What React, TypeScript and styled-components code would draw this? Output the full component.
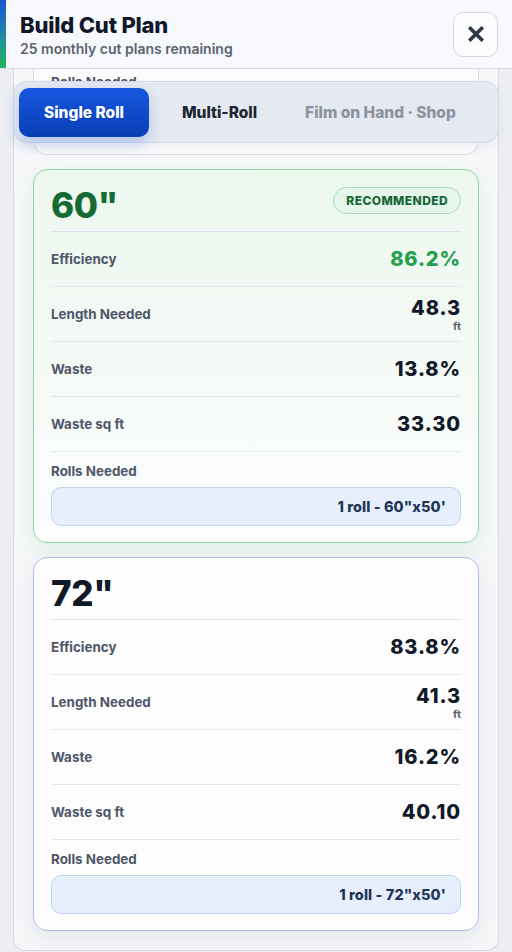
import styled, { createGlobalStyle } from "styled-components";

const GlobalStyle = createGlobalStyle`
  * { box-sizing: border-box; }
  html, body {
    margin: 0;
    padding: 0;
    background: #eef0f4;
    font-family: Inter, "Noto Sans", "Liberation Sans", sans-serif;
    color: #111827;
  }
`;

const Screen = styled.div`
  width: 512px;
  height: 952px;
  display: flex;
  flex-direction: column;
  overflow: hidden;
  background: linear-gradient(90deg, #eceef3 0%, #f3f4f7 50%, #eceef3 100%);
`;

const Header = styled.header`
  position: relative;
  z-index: 3;
  height: 69px;
  flex-shrink: 0;
  display: flex;
  align-items: center;
  justify-content: space-between;
  padding: 0 14px 0 20px;
  background: #f8f9fc;
  border-bottom: 1px solid #d6dae4;
  &::before {
    content: "";
    position: absolute;
    left: 0;
    top: 0;
    bottom: 0;
    width: 6px;
    background: linear-gradient(180deg, #1d55d6 0%, #1f8fa0 55%, #22b55a 100%);
  }
`;

const Titles = styled.div`
  display: flex;
  flex-direction: column;
  gap: 2px;
`;

const Title = styled.h1`
  margin: 0;
  font-size: 22px;
  font-weight: 800;
  letter-spacing: -0.2px;
  color: #0f172a;
`;

const Subtitle = styled.p`
  margin: 0;
  font-size: 14px;
  font-weight: 600;
  color: #5b6272;
`;

const CloseButton = styled.button`
  width: 45px;
  height: 45px;
  border-radius: 10px;
  border: 1px solid #d3d8e3;
  background: #fcfcfe;
  display: flex;
  align-items: center;
  justify-content: center;
  padding: 0;
  cursor: pointer;
`;

const Body = styled.div`
  position: relative;
  flex: 1;
  overflow: hidden;
`;

const Panel = styled.section`
  margin: -6px 13px 0 13px;
  padding: 0 19px 19px 19px;
  background: #f6f7f9;
  border: 1px solid #d8dce5;
  border-top: none;
  border-radius: 0 0 12px 12px;
  display: flex;
  flex-direction: column;
  gap: 14px;
`;

const Tabs = styled.nav`
  position: absolute;
  z-index: 2;
  top: 12px;
  left: 13px;
  right: 13px;
  height: 62px;
  display: flex;
  align-items: center;
  gap: 18px;
  padding: 0 5px;
  background: #e5e9f1;
  border: 1px solid #d2d9e6;
  border-radius: 14px;
  box-shadow: 0 4px 12px rgba(30, 50, 90, 0.06);
`;

const Tab = styled.button<{ $active?: boolean; $muted?: boolean }>`
  height: 49px;
  padding: ${(p) => (p.$active ? "0 25px" : "0 15px")};
  border: none;
  border-radius: 10px;
  font-family: inherit;
  font-size: 15.5px;
  font-weight: 800;
  white-space: nowrap;
  cursor: pointer;
  background: ${(p) =>
    p.$active ? "linear-gradient(180deg, #1656e0 0%, #0a3fb5 100%)" : "transparent"};
  color: ${(p) => (p.$active ? "#ffffff" : p.$muted ? "#8c93a0" : "#1f2634")};
  box-shadow: ${(p) => (p.$active ? "0 6px 14px rgba(22, 86, 224, 0.25)" : "none")};
`;

const Card = styled.article<{ $recommended?: boolean }>`
  border-radius: 14px;
  border: 1px solid ${(p) => (p.$recommended ? "#8fd6a0" : "#a8bfe9")};
  background: ${(p) =>
    p.$recommended
      ? "linear-gradient(180deg, #ecf7ee 0%, #f3f9f5 45%, #fcfdfd 100%)"
      : "#fdfdfe"};
  box-shadow: ${(p) =>
    p.$recommended
      ? "0 8px 22px rgba(34, 160, 80, 0.10)"
      : "0 8px 22px rgba(30, 45, 80, 0.08)"};
  padding: 0 17px 16px 17px;
  display: flex;
  flex-direction: column;
`;

const PartialCard = styled(Card)`
  border-top: none;
  border-radius: 0 0 14px 14px;
  padding-top: 0;
  padding-bottom: 17px;
  background: #fbfbfc;
  border-color: #d8dce5;
  box-shadow: none;
`;

const CardHead = styled.div`
  height: 62px;
  display: flex;
  align-items: center;
  justify-content: space-between;
  border-bottom: 1px solid #dde2ee;
`;

const Width = styled.h2<{ $green?: boolean }>`
  margin: 8px 0 0 0;
  font-size: 35px;
  font-weight: 800;
  letter-spacing: -0.3px;
  color: ${(p) => (p.$green ? "#166a34" : "#111827")};
`;

const Pill = styled.span`
  height: 27px;
  padding: 0 12px;
  display: inline-flex;
  align-items: center;
  border-radius: 14px;
  border: 1px solid #a9ddb7;
  background: #e6f5e9;
  color: #17653a;
  font-size: 12px;
  font-weight: 800;
  letter-spacing: 0.4px;
`;

const Row = styled.div`
  height: 55px;
  display: flex;
  align-items: center;
  justify-content: space-between;
  border-bottom: 1px solid #e3e7ef;
`;

const Label = styled.span`
  font-size: 13.4px;
  font-weight: 700;
  color: #4f5668;
`;

const Value = styled.div<{ $green?: boolean }>`
  display: flex;
  flex-direction: column;
  align-items: flex-end;
  font-size: 20px;
  font-weight: 800;
  letter-spacing: 0.9px;
  line-height: 24px;
  color: ${(p) => (p.$green ? "#22a04b" : "#111827")};
`;

const Unit = styled.span`
  display: block;
  margin-top: -1px;
  font-size: 11px;
  font-weight: 700;
  letter-spacing: 0;
  line-height: 14px;
  color: #5b6272;
`;

const RollsBlock = styled.div`
  display: flex;
  flex-direction: column;
  gap: 8px;
  padding-top: 11px;
`;

const RollBox = styled.div`
  height: 39px;
  display: flex;
  align-items: center;
  justify-content: flex-end;
  padding: 0 14px;
  border-radius: 10px;
  border: 1px solid #c0d3f2;
  background: #e7effc;
  color: #1e3557;
  font-size: 14.5px;
  font-weight: 800;
  letter-spacing: 0.1px;
`;

type Plan = {
  width: string;
  efficiency: string;
  length: string;
  waste: string;
  wasteSqFt: string;
  roll: string;
  recommended?: boolean;
};

const plans: Plan[] = [
  {
    width: '60"',
    efficiency: "86.2%",
    length: "48.3",
    waste: "13.8%",
    wasteSqFt: "33.30",
    roll: "1 roll - 60\"x50'",
    recommended: true,
  },
  {
    width: '72"',
    efficiency: "83.8%",
    length: "41.3",
    waste: "16.2%",
    wasteSqFt: "40.10",
    roll: "1 roll - 72\"x50'",
  },
];

function CloseIcon() {
  return (
    <svg width="20" height="20" viewBox="0 0 20 20" fill="none">
      <path d="M4.5 4.5 L15.5 15.5 M15.5 4.5 L4.5 15.5" stroke="#2f3746" strokeWidth="3.6" strokeLinecap="square" />
    </svg>
  );
}

function PlanCard({ plan }: { plan: Plan }) {
  return (
    <Card $recommended={plan.recommended}>
      <CardHead>
        <Width $green={plan.recommended}>{plan.width}</Width>
        {plan.recommended && <Pill>RECOMMENDED</Pill>}
      </CardHead>
      <Row>
        <Label>Efficiency</Label>
        <Value $green={plan.recommended}>{plan.efficiency}</Value>
      </Row>
      <Row>
        <Label>Length Needed</Label>
        <Value>
          <span>{plan.length}</span>
          <Unit>ft</Unit>
        </Value>
      </Row>
      <Row>
        <Label>Waste</Label>
        <Value>{plan.waste}</Value>
      </Row>
      <Row>
        <Label>Waste sq ft</Label>
        <Value>{plan.wasteSqFt}</Value>
      </Row>
      <RollsBlock>
        <Label>Rolls Needed</Label>
        <RollBox>{plan.roll}</RollBox>
      </RollsBlock>
    </Card>
  );
}

export default function App() {
  return (
    <>
      <GlobalStyle />
      <Screen>
        <Header>
          <Titles>
            <Title>Build Cut Plan</Title>
            <Subtitle>25 monthly cut plans remaining</Subtitle>
          </Titles>
          <CloseButton aria-label="Close">
            <CloseIcon />
          </CloseButton>
        </Header>
        <Body>
          <Tabs>
            <Tab $active>Single Roll</Tab>
            <Tab>Multi-Roll</Tab>
            <Tab $muted>Film on Hand · Shop</Tab>
          </Tabs>
          <Panel>
            <PartialCard>
              <RollsBlock>
                <Label>Rolls Needed</Label>
                <RollBox />
              </RollsBlock>
            </PartialCard>
            {plans.map((plan) => (
              <PlanCard key={plan.width} plan={plan} />
            ))}
          </Panel>
        </Body>
      </Screen>
    </>
  );
}
